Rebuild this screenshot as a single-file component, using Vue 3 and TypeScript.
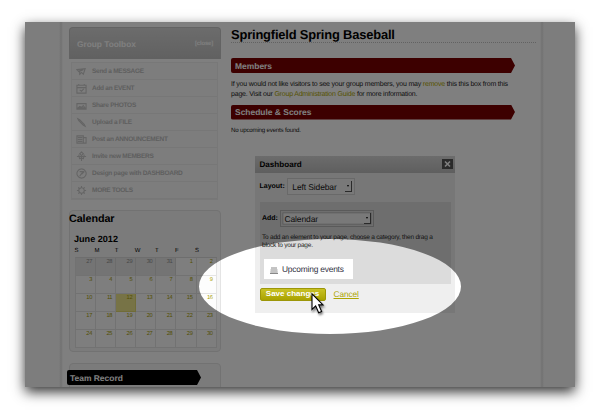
<script setup lang="ts">
interface Tool {
  label: string
  icon: string
}

interface Day {
  n: number
  kind: 'past' | 'day' | 'today'
}

const tools: Tool[] = [
  { label: 'Send a MESSAGE', icon: 'M1 4l9-1-2 6-2-2-2 2V5L8 4 3 6zM4 8l1 1' },
  { label: 'Add an EVENT', icon: 'M1 2.5h10v8.5H1zM1 5h10M3 1v2M9 1v2M4 7.5l2 1.500 2.500-2.500' },
  { label: 'Share PHOTOS', icon: 'M1 4h10v6H1zM2 9l2-2 2 1 2-2 2 3zM2 8.500h8' },
  { label: 'Upload a FILE', icon: 'M2 2l2 1 5 5 1 2-2-1-5-5z' },
  { label: 'Post an ANNOUNCEMENT', icon: 'M1 2h7v8H1zM8 4h3v6H3M2 4h5M2 6h5M2 8h5' },
  { label: 'Invite new MEMBERS', icon: 'M6 1l2 2-2 2-2-2zM1 6h10M3 4l1 5M9 4l-1 5M6 5v6M4 8h4' },
  { label: 'Design page with DASHBOARD', icon: 'M6 1a5 5 0 1 0 .1 0M4 4h4l-2 2-2 3M6 7l3-3' },
  { label: 'MORE TOOLS', icon: 'M6 1v2M6 9v2M1 6h2M9 6h2M2.500 2.500l1.500 1.500M8 8l1.500 1.500M9.500 2.500L8 4M4 8L2.500 9.500M6 3a3 3 0 1 0 .1 0M5 3.500L2.500 4.500M7.500 8.500L9.500 7.500' },
]

const weekdays: string[] = ['S', 'M', 'T', 'W', 'T', 'F', 'S']

const days: Day[] = [
  ...[27, 28, 29, 30, 31].map((n): Day => ({ n, kind: 'past' })),
  ...Array.from({ length: 30 }, (_, i): Day => ({ n: i + 1, kind: i + 1 === 12 ? 'today' : 'day' })),
]
</script>

<template>
  <div class="canvas">
    <div class="shot">
      <div class="page">
        <aside class="sidebar">
          <section class="toolbox">
            <header class="toolbox-head">
              <span>Group Toolbox</span>
              <span class="close">[close]</span>
            </header>
            <ul class="tools">
              <li v-for="t in tools" :key="t.label">
                <svg class="tool-icon" viewBox="0 0 12 12"><path :d="t.icon" /></svg>
                <span>{{ t.label }}</span>
              </li>
            </ul>
          </section>

          <section class="panel calendar">
            <h2>Calendar</h2>
            <h3>June 2012</h3>
            <div class="weekdays">
              <span v-for="(w, i) in weekdays" :key="i">{{ w }}</span>
            </div>
            <div class="days">
              <span v-for="(d, i) in days" :key="i" :class="d.kind">{{ d.n }}</span>
            </div>
          </section>

          <section class="panel record">
            <div class="ribbon black">Team Record</div>
          </section>
        </aside>

        <main class="main">
          <h1>Springfield Spring Baseball</h1>
          <div class="ribbon red">Members</div>
          <p class="copy">
            If you would not like visitors to see your group members, you may <a>remove</a> this this box from this<br />
            page. Visit our <a>Group Administration Guide</a> for more information.
          </p>
          <div class="ribbon red">Schedule &amp; Scores</div>
          <p class="none">No upcoming events found.</p>

          <section class="dialog">
            <header class="dialog-head">
              <span>Dashboard</span>
              <svg class="x" viewBox="0 0 11 10"><path d="M3 2.5l5 5M8 2.5l-5 5" /></svg>
            </header>
            <div class="field layout">
              <b>Layout:</b>
              <span class="select narrow"><span>Left Sidebar</span><i></i></span>
            </div>
            <div class="adder">
              <div class="field">
                <b>Add:</b>
                <span class="select wide"><span>Calendar</span><i></i></span>
              </div>
              <p>To add an element to your page, choose a category, then drag a<br />block to your page.</p>
              <div class="block">
                <svg viewBox="0 0 8 7"><path d="M1 1h6M.5 3h7M.3 5h7.4M0 6.5h8" /></svg>
                <span>Upcoming events</span>
              </div>
            </div>
            <div class="actions">
              <button>Save changes</button>
              <a>Cancel</a>
            </div>
          </section>
        </main>
      </div>

      <svg class="dim" viewBox="0 0 550 365">
        <path fill-rule="evenodd" d="M0 0H550V365H0ZM174 264.5a131 47.5 0 1 0 262 0a131 47.5 0 1 0 -262 0Z" />
      </svg>
      <svg class="cursor" viewBox="0 0 14 24">
        <path d="M1 1v17l4-4 3.300 7.500 3.200-1.400L8.300 13H13z" />
      </svg>
    </div>
  </div>
</template>

<style>
body {
  margin: 0;
  background: #fff;
}
</style>

<style scoped>
* {
  box-sizing: border-box;
}
.canvas {
  width: 600px;
  height: 420px;
  padding: 22px 25px;
  overflow: hidden;
  background: #fff;
  font-family: 'Liberation Sans', Arial, sans-serif;
  text-rendering: geometricPrecision;
  color: #000;
}
.shot {
  position: relative;
  width: 550px;
  height: 365px;
  box-shadow: 0 5px 12px rgba(0, 0, 0, 0.8);
}
.page {
  display: flex;
  gap: 10px;
  height: 365px;
  padding: 5px 39px 0 44px;
  overflow: hidden;
  background: linear-gradient(90deg, #fbfbfb 34px, #e4e4e4 36px, #fff 38px, #fff 515px, #e4e4e4 517px, #fbfbfb 519px);
}
h1,
h2,
h3,
p,
ul {
  margin: 0;
  padding: 0;
}
a {
  color: #aea600;
}
.sidebar {
  width: 152px;
  flex: none;
}
.toolbox {
  height: 175px;
}
.toolbox-head {
  display: flex;
  justify-content: space-between;
  align-items: center;
  height: 32px;
  padding: 0 7px;
  border-radius: 4px 4px 0 0;
  background: linear-gradient(#d8d8d8, #c2c2c2);
  border: 1px solid #c6c6c6;
  border-bottom: 0;
  color: #fff;
  font-size: 8.3px;
  font-weight: bold;
}
.close {
  font-size: 6px;
  letter-spacing: -0.2px;
}
.tools {
  list-style: none;
  margin: 3px 3px 0 2px;
  border: 1px solid #f0f0f0;
  background: #fbfbfb;
}
.tools li {
  display: flex;
  align-items: center;
  gap: 5px;
  height: 17px;
  padding-left: 4px;
  border-bottom: 1px solid #eee;
  color: #bebebe;
  font-size: 6.5px;
  font-weight: bold;
  letter-spacing: -0.27px;
}
.tool-icon {
  width: 11px;
  height: 11px;
  fill: none;
  stroke: #cacaca;
  stroke-width: 1.2;
}
.panel {
  border: 1px solid #e4e4e4;
  border-radius: 4px;
  background: #f6f6f6;
}
.calendar {
  height: 142px;
  margin-top: 8px;
}
.calendar h2 {
  height: 19px;
  margin-left: -1px;
  padding-top: 2px;
  font-size: 10.8px;
  letter-spacing: -0.1px;
  line-height: 13px;
}
.calendar h3 {
  padding: 3px 0 1px 4px;
  font-size: 9.1px;
  line-height: 12px;
}
.weekdays {
  display: grid;
  grid-template-columns: repeat(7, 20.1px);
  height: 11px;
  padding: 1px 0 0 4.5px;
  font-size: 6px;
  line-height: 8px;
}
.days {
  display: grid;
  grid-template-columns: repeat(7, 20.1px);
  grid-auto-rows: 18px;
  width: 142px;
  margin-left: 5px;
  border-top: 1px solid #dcdcdc;
  border-left: 1px solid #e4e4e4;
}
.days span {
  padding: 0.5px 3px 0 0;
  border-right: 1px solid #e4e4e4;
  border-bottom: 1px solid #e4e4e4;
  background: #fdfdfd;
  color: #a8a000;
  font-size: 5.7px;
  letter-spacing: -0.3px;
  line-height: 7px;
  text-align: right;
}
.days .past {
  background: #e8e8e8;
  border-right-color: #d8d8d8;
  color: #909090;
}
.days .today {
  background: #eee68c;
  border-color: #e0d870;
}
.record {
  height: 40px;
  margin-top: 11px;
  padding-top: 6px;
}
.ribbon {
  display: flex;
  align-items: center;
  height: 15px;
  padding-left: 4px;
  border-radius: 2px 0 0 2px;
  color: #fff;
  font-size: 8.45px;
  font-weight: bold;
  clip-path: polygon(0 0, calc(100% - 4px) 0, 100% 50%, calc(100% - 4px) 100%, 0 100%);
}
.black {
  width: 134px;
  margin-left: -3px;
  padding-left: 3px;
  background: #000;
}
.red {
  width: 284px;
  background: #7a0000;
}
.main {
  width: 305px;
  flex: none;
}
h1 {
  height: 16px;
  margin-bottom: 15px;
  border-bottom: 1px dotted #c4c4c4;
  font-size: 12.9px;
  letter-spacing: -0.17px;
  line-height: 16px;
}
.copy {
  height: 31.5px;
  padding-top: 6.5px;
  color: #1c1c1c;
  font-size: 7px;
  letter-spacing: -0.2px;
  line-height: 10px;
  white-space: nowrap;
}
.none {
  padding-top: 6px;
  color: #1c1c1c;
  font-size: 6.2px;
  letter-spacing: -0.22px;
  line-height: 10px;
}
.dialog {
  width: 200px;
  height: 157px;
  margin: 20.5px 0 0 23.5px;
  background: #efefef;
}
.dialog-head {
  display: flex;
  justify-content: space-between;
  align-items: center;
  height: 17px;
  padding: 0 2px 0 5px;
  background: linear-gradient(#d8d8d8, #bebebe);
  font-size: 8.1px;
  font-weight: bold;
}
.x {
  width: 11px;
  height: 10px;
  margin-top: -2px;
  background: #555;
  fill: none;
  stroke: #fff;
  stroke-width: 1.6;
}
.field {
  display: flex;
  align-items: center;
  font-size: 7px;
}
.layout {
  gap: 2px;
  padding: 5px 0 0 5px;
}
.select {
  display: flex;
  justify-content: space-between;
  align-items: center;
  height: 17px;
  padding: 0 2px 0 4.5px;
  border: 1px solid #d2d2d2;
  background: #f2f2f2;
  color: #1a1a1a;
  font-size: 8.5px;
  letter-spacing: -0.12px;
}
.select i {
  display: grid;
  place-items: center;
  width: 7px;
  height: 11px;
  border-right: 1px solid #555;
  border-bottom: 1px solid #555;
}
.select i::after {
  content: '';
  border: 1.5px solid transparent;
  border-top: 2px solid #000;
  border-bottom: 0;
}
.narrow {
  width: 68px;
}
.wide {
  width: 94px;
  height: 17px;
  padding: 0 2px 0 3px;
  border-color: #b4b4b4;
  box-shadow: inset 0 0 0 1.5px #ddd, inset 0 0 0 2.3px #aaa;
}
.adder {
  width: 191px;
  height: 82px;
  margin: 7px 0 0 5px;
  padding: 8px 0 0 2.5px;
  background: #dcdcdc;
}
.adder .field {
  gap: 2.5px;
}
.adder p {
  height: 23.5px;
  margin-top: 7px;
  color: #1c1c1c;
  font-size: 6.5px;
  letter-spacing: -0.22px;
  line-height: 8px;
  white-space: nowrap;
}
.block {
  display: flex;
  align-items: center;
  gap: 4px;
  width: 89px;
  height: 20px;
  margin: 1px 0 0 2px;
  padding-left: 6px;
  background: #fff;
  color: #334;
  font-size: 8.4px;
  letter-spacing: -0.2px;
}
.block svg {
  width: 8px;
  height: 7px;
  margin-top: 3px;
  stroke: #888;
  stroke-width: 1;
}
.actions {
  display: flex;
  align-items: center;
  gap: 8px;
  padding: 4px 0 0 5px;
  font-size: 8.3px;
  letter-spacing: -0.1px;
}
.actions a {
  margin-top: -1px;
  text-decoration: underline;
}
button {
  width: 66px;
  height: 12.5px;
  padding: 0;
  border: 1px solid #9c9608;
  border-radius: 2px;
  background: linear-gradient(#c9c224, #a9a200);
  color: #fff;
  font: bold 8px/10px 'Liberation Sans', Arial, sans-serif;
}
.dim {
  position: absolute;
  inset: 0;
  width: 550px;
  height: 365px;
  fill: rgba(0, 0, 0, 0.5);
}
.cursor {
  position: absolute;
  left: 285.5px;
  top: 270.5px;
  width: 13px;
  height: 22px;
  overflow: visible;
  fill: #fff;
  stroke: #000;
  stroke-width: 1.2;
  filter: drop-shadow(1px 2px 1px rgba(0, 0, 0, 0.5));
}
</style>
